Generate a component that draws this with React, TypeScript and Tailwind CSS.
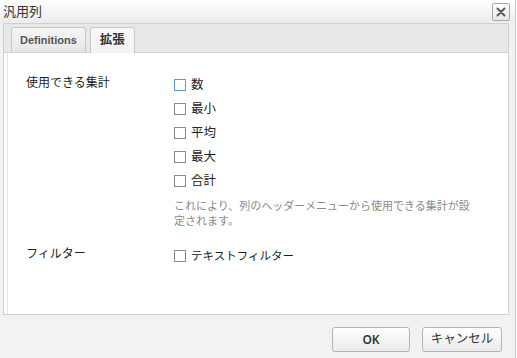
import React from "react";

const font = { fontFamily: '"Segoe UI", "Noto Sans", "Noto Sans CJK JP", sans-serif' };

function Box({ focus }: { focus?: boolean }) {
  return (
    <span
      className={
        "inline-block w-[12px] h-[12px] border bg-white shrink-0 " +
        (focus ? "border-[#5b9bd5]" : "border-[#8a8a8a]")
      }
    />
  );
}

function Check({ label, focus }: { label: string; focus?: boolean }) {
  return (
    <div className="flex items-center gap-[5px] h-[24px]">
      <Box focus={focus} />
      <span className="text-[12.5px] text-[#222] leading-none">{label}</span>
    </div>
  );
}

export default function App() {
  return (
    <div className="w-[517px] h-[358px] bg-white overflow-hidden" style={font}>
      <div className="w-[516px] h-[358px] bg-[#f2f2f2] border-r border-[#c6c6c6] flex flex-col">
        {/* title bar */}
        <div className="h-[23px] flex items-center justify-between pl-[3px] pr-[5px] bg-gradient-to-b from-[#ffffff] to-[#ececec]">
          <span className="text-[13px] text-[#333] leading-none">汎用列</span>
          <div className="w-[18px] h-[18px] border border-[#a8a8a8] rounded-[2px] bg-gradient-to-b from-white to-[#e6e6e6] flex items-center justify-center">
            <svg width="10" height="10" viewBox="0 0 10 10">
              <path d="M1.5 1.5 L8.5 8.5 M8.5 1.5 L1.5 8.5" stroke="#555" strokeWidth="1.8" strokeLinecap="round" />
            </svg>
          </div>
        </div>
        {/* tab panel */}
        <div className="ml-[3px] mr-[6px] h-[292px] border border-[#d0d0d0] flex flex-col bg-white">
          <div className="h-[29px] bg-[#e8e8e8] border-b border-[#d0d0d0] flex items-end pl-[7px] gap-[4px]">
            <div
              className="h-[25px] px-[8px] flex items-center border border-b-0 border-[#c8c8c8] rounded-t-[3px] bg-gradient-to-b from-[#f6f6f6] to-[#e6e6e6] text-[11px] font-bold text-[#555]"
              style={{ fontFamily: '"Liberation Sans", Arial, sans-serif' }}
            >
              Definitions
            </div>
            <div className="h-[26px] px-[9px] -mb-px flex items-center border border-b-0 border-[#c8c8c8] rounded-t-[3px] bg-gradient-to-b from-[#f9f9f9] to-[#f3f3f3] text-[12.5px] font-bold text-[#333]">
              拡張
            </div>
          </div>
          <div className="flex-1 ml-[3px] border-l border-[#e2e2e2] pt-[20px]">
            <div className="flex">
              <div className="w-[166px] pl-[18px] pt-[4px] text-[12px] text-[#222] leading-none">使用できる集計</div>
              <div className="flex flex-col">
                <Check label="数" focus />
                <Check label="最小" />
                <Check label="平均" />
                <Check label="最大" />
                <Check label="合計" />
                <div className="mt-[5px] text-[11px] leading-[15px] text-[#8a8a8a] w-[302px]">
                  これにより、列のヘッダーメニューから使用できる集計が設定されます。
                </div>
              </div>
            </div>
            <div className="flex mt-[18px]">
              <div className="w-[166px] pl-[18px] pt-[2px] text-[12px] text-[#222] leading-none">フィルター</div>
              <div className="flex items-center gap-[5px] h-[16px] pt-[3px]">
                <Box />
                <span className="text-[11.5px] text-[#222] leading-none">テキストフィルター</span>
              </div>
            </div>
          </div>
        </div>
        {/* buttons */}
        <div className="flex justify-end gap-[12px] pr-[13px] pt-[12px]">
          <div className="w-[78px] h-[25px] border border-[#b4b4b4] rounded-[3px] bg-gradient-to-b from-white to-[#ebebeb] flex items-center justify-center text-[12px] font-semibold text-[#333]">
            OK
          </div>
          <div className="w-[80px] h-[25px] border border-[#b4b4b4] rounded-[3px] bg-gradient-to-b from-white to-[#ebebeb] flex items-center justify-center text-[12.5px] text-[#333]">
            キャンセル
          </div>
        </div>
      </div>
    </div>
  );
}
